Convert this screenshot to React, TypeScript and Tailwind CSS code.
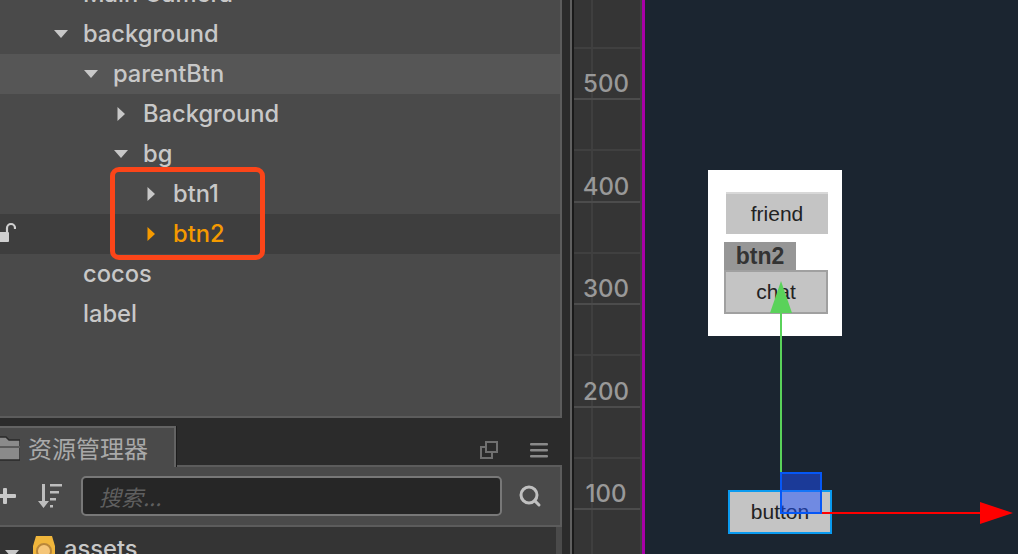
import { Search } from 'lucide-react'

const treeRows = [
  { label: 'Main Camera', indent: 83, open: null, tone: '' },
  { label: 'background', indent: 83, open: true, tone: '' },
  { label: 'parentBtn', indent: 113, open: true, tone: 'bg-[#565656]' },
  { label: 'Background', indent: 143, open: false, tone: '' },
  { label: 'bg', indent: 143, open: true, tone: '' },
  { label: 'btn1', indent: 173, open: false, tone: '' },
  { label: 'btn2', indent: 173, open: false, tone: 'bg-[#3e3e3e]', active: true, locked: true },
  { label: 'cocos', indent: 83, open: null, tone: '' },
  { label: 'label', indent: 83, open: null, tone: '' },
]

const rulerMarks = ['', '500', '', '400', '', '300', '', '200', '', '100', '']

function Caret({ open, color }: { open: boolean; color: string }) {
  return (
    <svg width="14" height="14" viewBox="0 0 14 14" className="shrink-0">
      {open ? <path d="M0 3h14L7 11z" fill={color} /> : <path d="M3.5 0v14L11 7z" fill={color} />}
    </svg>
  )
}

function TreeRow({ row }: { row: (typeof treeRows)[number] }) {
  const color = row.active ? '#f59a00' : '#c8c8c8'
  return (
    <div className={`relative flex h-10 items-center ${row.tone}`} style={{ paddingLeft: row.indent - 29 }}>
      {row.locked && (
        <svg width="16" height="22" viewBox="0 0 16 22" className="absolute left-0 top-[8px]">
          <path d="M7 10V6a4 4 0 0 1 8 0v1" fill="none" stroke="#d0d0d0" strokeWidth="2.2" />
          <rect x="-4" y="10" width="13" height="10" rx="1" fill="#d0d0d0" />
        </svg>
      )}
      <div className="flex w-[29px] items-center">
        {row.open !== null && <Caret open={row.open} color={color} />}
      </div>
      <span className={`text-[23.7px] font-[450] leading-none ${row.active ? 'text-[#f59a00]' : 'text-[#c8c8c8]'}`}>{row.label}</span>
    </div>
  )
}

export default function App() {
  return (
    <div className="flex h-[554px] w-[1018px] overflow-hidden bg-[#2b2b2b] font-['Inter',sans-serif]">
      <aside className="flex w-[562px] shrink-0 flex-col">
        {/* Hierarchy */}
        <div className="relative h-[418px] shrink-0 overflow-hidden border-r-2 border-b-2 border-[#5c5c5c] bg-[#4a4a4a]">
          <div className="-mt-[26px]">
            {treeRows.map((row) => (
              <TreeRow key={row.label} row={row} />
            ))}
          </div>
          <div className="absolute left-[110px] top-[167px] h-[93px] w-[155px] rounded-[9px] border-[5px] border-[#fb4519]" />
        </div>

        {/* Assets header */}
        <div className="flex h-[49px] shrink-0 items-end border-b-2 border-[#5c5c5c] pr-[14px]">
          <div className="-mb-[2px] flex h-[41px] w-[176px] items-center gap-2 border-t-2 border-r-2 border-[#636363] bg-[#4a4a4a] shadow-[1px_0_0_#1c1c1c]">
            <svg width="20" height="26" viewBox="0 0 20 26" className="shrink-0">
              <path d="M-4 2h10l3 3h11v20H-4z" fill="#8a8a8a" stroke="#2a2a2a" strokeWidth="1.5" />
              <rect x="-4" y="11" width="24" height="2" fill="#5a5a5a" />
            </svg>
            <span className="font-['Noto_Sans_CJK_SC',sans-serif] text-[24px] leading-none text-[#a9a9a9]">资源管理器</span>
          </div>
          <div className="ml-auto flex h-[41px] items-center gap-[32px] pt-[10px]">
            <svg width="18" height="18" viewBox="0 0 18 18" fill="none" stroke="#707070" strokeWidth="2">
              <rect x="1" y="6" width="11" height="11" />
              <rect x="6" y="1" width="11" height="10" fill="#2b2b2b" />
            </svg>
            <svg width="18" height="16" viewBox="0 0 18 16" fill="#8a8a8a">
              <rect y="1" width="18" height="2.5" rx="1" />
              <rect y="7" width="18" height="2.5" rx="1" />
              <rect y="13" width="18" height="2.5" rx="1" />
            </svg>
          </div>
        </div>

        {/* Toolbar */}
        <div className="flex h-[60px] shrink-0 items-center border-r-2 border-b-2 border-[#5c5c5c] bg-[#4a4a4a]">
          <svg width="16" height="16" viewBox="0 0 16 16" className="shrink-0" fill="#c8c8c8">
            <rect x="-2" y="6" width="18" height="4" rx="1" />
            <rect x="3" y="0" width="4" height="16" rx="1" />
          </svg>
          <svg width="24" height="26" viewBox="0 0 24 26" className="ml-[22px] shrink-0" fill="#bdbdbd">
            <path d="M4 1h3v17h4l-5.5 7L0 18h4z" />
            <rect x="12" y="1" width="12" height="2.5" />
            <rect x="12" y="8" width="9" height="2.5" />
            <rect x="12" y="15" width="6" height="2.5" />
            <rect x="12" y="22" width="3" height="2.5" />
          </svg>
          <div className="ml-[19px] flex h-10 w-[421px] items-center rounded-[5px] border-2 border-[#787878] bg-[#262626] pl-[16px]">
            <span className="font-['Noto_Sans_CJK_SC',sans-serif] text-[22px] italic leading-none text-[#5f5f5f]">搜索...</span>
          </div>
          <Search className="ml-[16px] h-[24px] w-[24px] text-[#c0c0c0]" strokeWidth={3} />
        </div>

        {/* Assets tree */}
        <div className="flex flex-1 items-start border-r-[6px] border-[#4a4a4a] bg-[#343434]">
          <div className="ml-[5px] mt-[20px]"><Caret open color="#c8c8c8" /></div>
          <svg width="22" height="28" viewBox="0 0 22 28" className="ml-[14px] mt-[9px] shrink-0">
            <path d="M3 0h16l3 10v18H0V10z" fill="#f0b63c" />
            <circle cx="11" cy="15" r="7" fill="#f5c679" stroke="#b9873a" strokeWidth="2" />
          </svg>
          <span className="ml-[9px] mt-[10px] text-[23.7px] font-[450] leading-none text-[#c8c8c8]">assets</span>
        </div>
      </aside>

      {/* Gutter */}
      <div className="flex w-[12px] shrink-0 justify-end bg-[#2b2b2b]">
        <div className="h-full w-[2px] bg-[#606060]" />
        <div className="h-full w-[2px] bg-[#1a1a1a]" />
      </div>

      {/* Ruler */}
      <div className="relative w-[68px] shrink-0 overflow-hidden border-r-2 border-[#414141] bg-[#353535]">
        <div className="absolute left-[17px] top-0 h-full w-[2px] bg-[#3f3f3f]" />
        <div className="-mt-[2.5px]">
          {rulerMarks.map((mark, i) => (
            <div
              key={i}
              className={`relative flex h-[51.25px] items-end justify-center border-b-2 ${mark ? 'border-[#4c4c4c]' : 'border-[#404040]'}`}
            >
              {mark && <span className="pr-[2px] pb-[2px] text-[24px] font-[450] leading-none text-[#999999]">{mark}</span>}
            </div>
          ))}
        </div>
      </div>
      <div className="w-[3px] shrink-0 bg-[#a800a8]" />

      {/* Scene */}
      <div className="relative flex-1 bg-[#1b2530] font-['Liberation_Sans',sans-serif]">
        <div className="absolute left-[63px] top-[170px] h-[166px] w-[134px] bg-white" />
        <div className="absolute left-[81px] top-[192px] flex h-[42px] w-[102px] items-center justify-center border-t-2 border-[#d8d8d8] bg-[#c4c4c4] text-[21px] text-[#222]">
          friend
        </div>
        <div className="absolute left-[79px] top-[242px] flex h-[28px] w-[72px] items-center justify-center bg-[#969696] text-[23px] font-bold text-[#333]">
          btn2
        </div>
        <div className="absolute left-[79px] top-[270px] flex h-[44px] w-[104px] items-center justify-center border-2 border-[#a0a0a0] bg-[#c4c4c4] text-[21px] text-[#222]">
          chat
        </div>
        <div className="absolute left-[83px] top-[490px] flex h-[44px] w-[104px] items-center justify-center border-2 border-[#0a9bf0] bg-[#c4c4c4] text-[21px] text-[#222]">
          button
        </div>
        {/* Gizmo */}
        <svg width="373" height="554" viewBox="0 0 373 554" className="absolute left-0 top-0">
          <rect x="135" y="300" width="2" height="172" fill="#5ad25a" />
          <path d="M136 281 L147 313 H125 Z" fill="#5ad25a" />
          <rect x="177" y="512" width="158" height="2" fill="#ff0000" />
          <path d="M335 502 L368 513 L335 524 Z" fill="#ff0000" />
          <rect x="136" y="473" width="40" height="40" fill="#1c50ff" fillOpacity="0.5" stroke="#0657f5" strokeWidth="2" />
        </svg>
      </div>
    </div>
  )
}
